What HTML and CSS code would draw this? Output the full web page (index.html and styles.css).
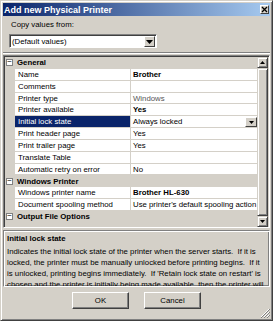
FILE: index.html
```html
<!DOCTYPE html>
<html lang="en">
<head>
  <meta charset="UTF-8">
  <title>Add new Physical Printer</title>
  <link rel="stylesheet" href="styles.css">
</head>
<body>
  <div class="window">
    <div class="titlebar">
      <span class="title">Add new Physical Printer</span>
      <span class="close">
        <svg width="7" height="7" viewBox="0 0 7 7"><path d="M1 1L6 6M6 1L1 6" stroke="#000" stroke-width="1.3"/></svg>
      </span>
    </div>

    <div class="copy">
      <div class="label">Copy values from:</div>
      <div class="combo">
        <span class="combo-text">(Default values)</span>
        <span class="drop"><svg width="7" height="4" viewBox="0 0 7 4"><path d="M0 0H7L3.5 4Z" fill="#000"/></svg></span>
      </div>
    </div>

    <div class="separator"></div>

    <div class="grid">
      <div class="props">
        <div class="cat"><span class="box">&minus;</span>General</div>
        <div class="row"><span class="name">Name</span><span class="val bold">Brother</span></div>
        <div class="row"><span class="name">Comments</span><span class="val"></span></div>
        <div class="row"><span class="name">Printer type</span><span class="val grey">Windows</span></div>
        <div class="row"><span class="name">Printer available</span><span class="val bold">Yes</span></div>
        <div class="row selected"><span class="name">Initial lock state</span><span class="val">Always locked<span class="cell-drop"><svg width="5" height="3" viewBox="0 0 5 3"><path d="M0 0H5L2.5 3Z" fill="#000"/></svg></span></span></div>
        <div class="row"><span class="name">Print header page</span><span class="val">Yes</span></div>
        <div class="row"><span class="name">Print trailer page</span><span class="val">Yes</span></div>
        <div class="row"><span class="name">Translate Table</span><span class="val"></span></div>
        <div class="row"><span class="name">Automatic retry on error</span><span class="val">No</span></div>
        <div class="cat"><span class="box">&minus;</span>Windows Printer</div>
        <div class="row"><span class="name">Windows printer name</span><span class="val bold">Brother HL-630</span></div>
        <div class="row"><span class="name">Document spooling method</span><span class="val">Use printer's default spooling action</span></div>
        <div class="cat"><span class="box">&minus;</span>Output File Options</div>
      </div>
      <div class="scrollbar">
        <span class="sbtn"><svg width="5" height="3" viewBox="0 0 5 3"><path d="M0 3H5L2.5 0Z" fill="#000"/></svg></span>
        <span class="thumb"></span>
        <span class="sbtn"><svg width="5" height="3" viewBox="0 0 5 3"><path d="M0 0H5L2.5 3Z" fill="#000"/></svg></span>
      </div>
    </div>

    <div class="desc">
      <div class="desc-title">Initial lock state</div>
      <p>Indicates the initial lock state of the printer when the server starts.&nbsp; If it is<br>
      locked, the printer must be manually unlocked before printing begins.&nbsp; If it<br>
      is unlocked, printing begins immediately.&nbsp; If 'Retain lock state on restart' is<br>
      chosen and the printer is initially being made available, then the printer will</p>
    </div>

    <div class="buttons">
      <button class="btn">OK</button>
      <button class="btn">Cancel</button>
    </div>

    <svg class="grip" width="10" height="10" viewBox="0 0 10 10">
      <path d="M9 1L1 9M9 4L4 9M9 7L7 9" stroke="#fff" stroke-width="1"/>
      <path d="M10 1L1 10M10 4L4 10M10 7L7 10" stroke="#808080" stroke-width="1"/>
    </svg>
  </div>
</body>
</html>
```

FILE: styles.css
```css
body {
  margin: 0;
  font-family: "Liberation Sans", Arial, sans-serif;
  font-size: 7.8px;
  color: #000;
}

.window {
  position: relative;
  width: 273px;
  height: 321px;
  box-sizing: border-box;
  background: #d4d0c8;
  border: 1px solid;
  border-color: #d4d0c8 #404040 #404040 #d4d0c8;
  box-shadow: inset 1px 1px #fff, inset -1px -1px #808080;
  padding: 2px;
  display: flex;
  flex-direction: column;
}

.titlebar {
  height: 13px;
  display: flex;
  align-items: center;
  justify-content: space-between;
  background: linear-gradient(to right, #0a246a, #a6caf0);
  padding: 0 1px 0 1px;
}

.title {
  color: #fff;
  font-weight: bold;
  font-size: 9px;
}

.close {
  width: 9px;
  height: 9px;
  box-sizing: border-box;
  background: #d4d0c8;
  border: 1px solid;
  border-color: #fff #404040 #404040 #fff;
  display: flex;
  align-items: center;
  justify-content: center;
}

.copy {
  padding: 4px 0 0 6px;
}

.label {
  height: 10px;
  line-height: 10px;
  padding-left: 2px;
  margin-bottom: 4px;
}

.combo {
  width: 148px;
  height: 14px;
  box-sizing: border-box;
  background: #fff;
  border: 1px solid;
  border-color: #808080 #fff #fff #808080;
  box-shadow: inset 1px 1px #404040;
  display: flex;
  align-items: center;
  justify-content: space-between;
  padding: 1px 1px 0 2px;
}

.drop {
  width: 11px;
  height: 11px;
  box-sizing: border-box;
  background: #d4d0c8;
  border: 1px solid;
  border-color: #fff #404040 #404040 #fff;
  display: flex;
  align-items: center;
  justify-content: center;
}

.separator {
  margin-top: 4px;
  height: 1px;
  border-top: 1px solid #808080;
  background: #fff;
}

.grid {
  margin-top: 1px;
  height: 173px;
  box-sizing: border-box;
  border: 1px solid;
  border-color: #808080 #fff #fff #808080;
  box-shadow: inset 1px 1px #404040;
  padding: 1px 1px 0 1px;
  display: flex;
  background: #d4d0c8;
}

.props {
  flex: 1;
  overflow: hidden;
}

.cat, .row {
  height: 11.85px;
  line-height: 11px;
  display: flex;
  white-space: nowrap;
}

.cat {
  font-weight: bold;
  align-items: center;
}

.box {
  width: 7px;
  height: 7px;
  box-sizing: border-box;
  border: 1px solid #808080;
  background: #fff;
  font-weight: normal;
  font-size: 8px;
  line-height: 4px;
  text-align: center;
  margin: 0 4px 0 1px;
}

.name, .val {
  background: #fff;
  border-bottom: 1px solid #d4d0c8;
  box-sizing: border-box;
  overflow: hidden;
}

.name {
  margin-left: 10px;
  width: 116px;
  padding-left: 3px;
  border-right: 1px solid #d4d0c8;
}

.val {
  flex: 1;
  padding-left: 2px;
  display: flex;
  justify-content: space-between;
}

.bold {
  font-weight: bold;
}

.grey {
  color: #555;
}

.selected .name {
  background: #0a246a;
  color: #fff;
}

.cell-drop {
  width: 12px;
  height: 10px;
  box-sizing: border-box;
  margin-top: 1px;
  background: #d4d0c8;
  border: 1px solid;
  border-color: #fff #404040 #404040 #fff;
  display: flex;
  align-items: center;
  justify-content: center;
}

.scrollbar {
  width: 11px;
  display: flex;
  flex-direction: column;
  background: #e6e3dc;
}

.sbtn, .thumb {
  box-sizing: border-box;
  background: #d4d0c8;
  border: 1px solid;
  border-color: #d4d0c8 #404040 #404040 #d4d0c8;
  box-shadow: inset 1px 1px #fff, inset -1px -1px #808080;
}

.sbtn {
  height: 11px;
  display: flex;
  align-items: center;
  justify-content: center;
}

.thumb {
  flex: 1;
}

.desc {
  margin-top: 2px;
  height: 57px;
  box-sizing: border-box;
  border: 1px solid;
  border-color: #808080 #fff #fff #808080;
  box-shadow: inset 1px 1px #fff, inset -1px -1px #808080;
  padding: 2px 3px 0 3px;
  overflow: hidden;
  white-space: nowrap;
}

.desc-title {
  font-weight: bold;
  line-height: 11px;
  margin-bottom: 2px;
}

.desc p {
  margin: 0;
  line-height: 11px;
}

.buttons {
  display: flex;
  justify-content: center;
  gap: 15px;
  margin-top: 5px;
}

.btn {
  width: 57px;
  height: 17px;
  padding: 0;
  font-family: "Liberation Sans", Arial, sans-serif;
  font-size: 7.8px;
  color: #000;
  background: #d4d0c8;
  border: 1px solid;
  border-color: #fff #404040 #404040 #fff;
  box-shadow: inset -1px -1px #808080;
}

.grip {
  position: absolute;
  right: 2px;
  bottom: 2px;
}
```
